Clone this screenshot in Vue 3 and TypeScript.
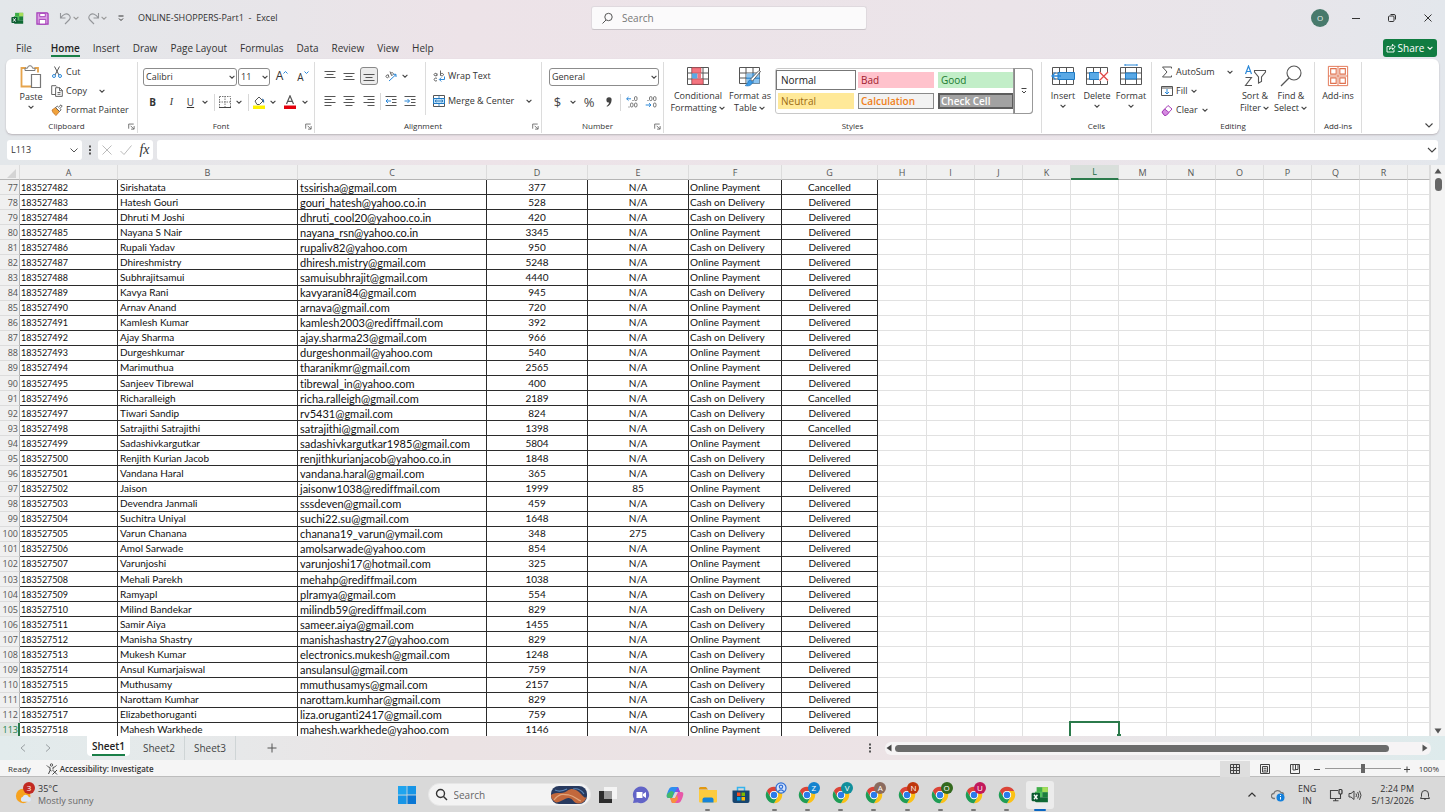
<script setup lang="ts">
import { ref } from 'vue'

type Row = [number, string, string, string, string, 'O' | 'C', 'D' | 'X']

const source: Row[] = [
  [77, 'Sirishatata', 'tssirisha@gmail.com', '377', 'N/A', 'O', 'X'],
  [78, 'Hatesh Gouri', 'gouri_hatesh@yahoo.co.in', '528', 'N/A', 'C', 'D'],
  [79, 'Dhruti M Joshi', 'dhruti_cool20@yahoo.co.in', '420', 'N/A', 'C', 'D'],
  [80, 'Nayana S Nair', 'nayana_rsn@yahoo.co.in', '3345', 'N/A', 'O', 'D'],
  [81, 'Rupali Yadav', 'rupaliv82@yahoo.com', '950', 'N/A', 'C', 'D'],
  [82, 'Dhireshmistry', 'dhiresh.mistry@gmail.com', '5248', 'N/A', 'O', 'D'],
  [83, 'Subhrajitsamui', 'samuisubhrajit@gmail.com', '4440', 'N/A', 'O', 'D'],
  [84, 'Kavya Rani', 'kavyarani84@gmail.com', '945', 'N/A', 'C', 'D'],
  [85, 'Arnav Anand', 'arnava@gmail.com', '720', 'N/A', 'O', 'D'],
  [86, 'Kamlesh Kumar', 'kamlesh2003@rediffmail.com', '392', 'N/A', 'O', 'D'],
  [87, 'Ajay Sharma', 'ajay.sharma23@gmail.com', '966', 'N/A', 'C', 'D'],
  [88, 'Durgeshkumar', 'durgeshonmail@yahoo.com', '540', 'N/A', 'O', 'D'],
  [89, 'Marimuthua', 'tharanikmr@gmail.com', '2565', 'N/A', 'O', 'D'],
  [90, 'Sanjeev Tibrewal', 'tibrewal_in@yahoo.com', '400', 'N/A', 'O', 'D'],
  [91, 'Richaralleigh', 'richa.ralleigh@gmail.com', '2189', 'N/A', 'C', 'X'],
  [92, 'Tiwari Sandip', 'rv5431@gmail.com', '824', 'N/A', 'C', 'D'],
  [93, 'Satrajithi Satrajithi', 'satrajithi@gmail.com', '1398', 'N/A', 'C', 'X'],
  [94, 'Sadashivkargutkar', 'sadashivkargutkar1985@gmail.com', '5804', 'N/A', 'O', 'D'],
  [95, 'Renjith Kurian Jacob', 'renjithkurianjacob@yahoo.co.in', '1848', 'N/A', 'C', 'D'],
  [96, 'Vandana Haral', 'vandana.haral@gmail.com', '365', 'N/A', 'C', 'D'],
  [97, 'Jaison', 'jaisonw1038@rediffmail.com', '1999', '85', 'O', 'D'],
  [98, 'Devendra Janmali', 'sssdeven@gmail.com', '459', 'N/A', 'C', 'D'],
  [99, 'Suchitra Uniyal', 'suchi22.su@gmail.com', '1648', 'N/A', 'O', 'D'],
  [100, 'Varun Chanana', 'chanana19_varun@ymail.com', '348', '275', 'C', 'D'],
  [101, 'Amol Sarwade', 'amolsarwade@yahoo.com', '854', 'N/A', 'O', 'D'],
  [102, 'Varunjoshi', 'varunjoshi17@hotmail.com', '325', 'N/A', 'O', 'D'],
  [103, 'Mehali Parekh', 'mehahp@rediffmail.com', '1038', 'N/A', 'O', 'D'],
  [104, 'Ramyapl', 'plramya@gmail.com', '554', 'N/A', 'C', 'D'],
  [105, 'Milind Bandekar', 'milindb59@rediffmail.com', '829', 'N/A', 'C', 'D'],
  [106, 'Samir Aiya', 'sameer.aiya@gmail.com', '1455', 'N/A', 'C', 'D'],
  [107, 'Manisha Shastry', 'manishashastry27@yahoo.com', '829', 'N/A', 'O', 'D'],
  [108, 'Mukesh Kumar', 'electronics.mukesh@gmail.com', '1248', 'N/A', 'C', 'D'],
  [109, 'Ansul Kumarjaiswal', 'ansulansul@gmail.com', '759', 'N/A', 'O', 'D'],
  [110, 'Muthusamy', 'mmuthusamys@gmail.com', '2157', 'N/A', 'C', 'D'],
  [111, 'Narottam Kumhar', 'narottam.kumhar@gmail.com', '829', 'N/A', 'C', 'D'],
  [112, 'Elizabethoruganti', 'liza.oruganti2417@gmail.com', '759', 'N/A', 'C', 'D'],
  [113, 'Mahesh Warkhede', 'mahesh.warkhede@yahoo.com', '1146', 'N/A', 'O', 'D'],
]

const firstId = 183527482
const rows = source.map((r) => ({
  num: r[0],
  id: firstId + r[0] - 77,
  name: r[1],
  email: r[2],
  amount: r[3],
  discount: r[4],
  payment: r[5] === 'O' ? 'Online Payment' : 'Cash on Delivery',
  status: r[6] === 'D' ? 'Delivered' : 'Cancelled',
}))

const dataCols = ['A', 'B', 'C', 'D', 'E', 'F', 'G']
const emptyCols = ['H', 'I', 'J', 'K', 'L', 'M', 'N', 'O', 'P', 'Q', 'R', '']
const tabs = ['File', 'Home', 'Insert', 'Draw', 'Page Layout', 'Formulas', 'Data', 'Review', 'View', 'Help']
const sheets = ['Sheet1', 'Sheet2', 'Sheet3']
const activeTab = ref('Home')
const activeSheet = ref('Sheet1')
const cellName = ref('L113')
const formula = ref('')
const zoomLevel = ref(50)
const profiles = [
  { letter: 'Z', tone: 'blue' },
  { letter: 'V', tone: 'teal' },
  { letter: 'A', tone: 'brown' },
  { letter: 'N', tone: 'rust' },
  { letter: 'O', tone: 'green' },
  { letter: 'U', tone: 'pink' },
]
</script>

<template>
  <div class="desktop">
    <svg class="defs" aria-hidden="true">
      <symbol id="chev" viewBox="0 0 8 8"><path d="M1.6 2.8 4 5.2 6.4 2.8" fill="none" stroke="currentColor" stroke-width="1.1" /></symbol>
      <symbol id="launch" viewBox="0 0 8 8"><path d="M.8 6.5V1.2H6.500M3 3.200 6.600 6.800M7 3.500V7H3.500" fill="none" stroke="currentColor" stroke-width=".9" /></symbol>
      <symbol id="chrome" viewBox="0 0 48 48">
        <path fill="#db4437" d="M4.950 13A22 22 0 0 1 43.050 13H24A11 11 0 0 0 14.470 29.500Z" />
        <path fill="#fbc116" d="M43.050 13A22 22 0 0 1 24 46L33.530 29.500A11 11 0 0 0 24 13Z" />
        <path fill="#1f9d55" d="M24 46A22 22 0 0 1 4.950 13L14.470 29.500A11 11 0 0 0 33.530 29.500Z" />
        <circle cx="24" cy="24" r="11" fill="#fff" /><circle cx="24" cy="24" r="8.600" fill="#2b7bea" />
      </symbol>
      <symbol id="excel" viewBox="0 0 16 16">
        <path fill="#3fae49" d="M5 1h10v4.500H5z" /><path fill="#a5dd5a" d="M10 1h5v4.500h-5z" /><path fill="#4fc15b" d="M3.500 5h6.500v5H3.500z" />
        <path fill="#1b7f3b" d="M10 5.500h5V10h-5z" /><path fill="#0f6a33" d="M3.500 10H15v4.500H5A1.500 1.500 0 0 1 3.500 13z" />
        <rect x=".5" y="6" width="7.500" height="7.500" rx="1" fill="#0b5a30" /><path d="m2.700 7.800 3 4m0-4-3 4" stroke="#fff" stroke-width="1.200" />
      </symbol>
    </svg>

    <header class="chrome">
      <div class="titlebar">
        <div class="quick">
          <svg class="i13" viewBox="0 0 16 16"><use href="#excel" /></svg>
          <button class="save" aria-label="Save"><svg class="i13" viewBox="0 0 14 14"><path d="M1 1h11l1 1v11H1z" fill="#dba0e4" stroke="#a33bb8" stroke-width="1.300" /><path d="M4 1.500h6V5H4zM3.500 8h7v5h-7z" fill="#fff" stroke="#a33bb8" /></svg></button>
          <button class="hist" aria-label="Undo"><svg class="i13" viewBox="0 0 13 13"><path d="M1.500 1v5H6.500M1.800 5.800C4 2 7.500 1 9.800 2.800c2 1.700 1.700 3.700.2 5.200L6 12" fill="none" stroke="#94969a" stroke-width="1.100" /></svg></button>
          <svg class="chev dim"><use href="#chev" /></svg>
          <button class="hist redo" aria-label="Redo"><svg class="i13" viewBox="0 0 13 13"><path d="M11.500 1v5H6.500M11.200 5.800C9 2 5.500 1 3.200 2.800c-2 1.700-1.700 3.700-.2 5.200L7 12" fill="none" stroke="#94969a" stroke-width="1.100" /></svg></button>
          <svg class="chev dim"><use href="#chev" /></svg>
          <button class="custom" aria-label="Customize"><svg class="chev" viewBox="0 0 8 8"><path d="M1.500 2h5M2 4.500 4 6.500 6 4.500" fill="none" stroke="#333" /></svg></button>
          <span class="doc">ONLINE-SHOPPERS-Part1&nbsp; -&nbsp; Excel</span>
        </div>
        <label class="search"><svg class="i13" viewBox="0 0 13 13"><circle cx="7.500" cy="5" r="3.700" fill="none" stroke="#555" /><path d="M5 8 1.500 11.500" stroke="#555" /></svg><input type="text" placeholder="Search" aria-label="Search" /></label>
        <div class="window">
          <span class="avatar">O</span>
          <button aria-label="Minimize"><svg class="i10" viewBox="0 0 10 10"><path d="M1 5.500h8" stroke="#333" /></svg></button>
          <button aria-label="Restore"><svg class="i10" viewBox="0 0 10 10"><rect x="1.500" y="3" width="5.500" height="5.500" rx="1" fill="none" stroke="#333" /><path d="M3.500 1.500H7q1.500 0 1.500 1.500v3.500" fill="none" stroke="#333" /></svg></button>
          <button aria-label="Close"><svg class="i10" viewBox="0 0 10 10"><path d="m1.500 1.500 7 7m0-7-7 7" stroke="#333" /></svg></button>
        </div>
      </div>

      <nav class="tabs">
        <button v-for="t in tabs" :key="t" :class="{ on: t === activeTab }" @click="activeTab = t"><span>{{ t }}</span></button>
        <button class="share"><svg class="i10" viewBox="0 0 10 10"><path d="M3.500 3.500h-2.500v5.500h7V6.500M3.500 6.500C3.500 4 5 3 6.500 3V1.200L9.300 4 6.500 6.500V5C5 5 4.200 5.500 3.500 6.500Z" fill="none" stroke="#fff" stroke-width=".9" /></svg>Share<svg class="chev"><use href="#chev" /></svg></button>
      </nav>

      <section class="ribbon">
        <div class="group clip">
          <div class="body">
            <button class="big paste"><svg class="i24" viewBox="0 0 24 24"><path d="M7 3H2.500v18.500H12M15.500 3H19v4.500" fill="none" stroke="#e6a44c" stroke-width="1.800" /><path d="M6 5.500V3.200h2.500a2.500 2.500 0 0 1 5 0H16v2.300z" fill="#fff" stroke="#777" /><path d="M12.500 9.500h9v13h-9z" fill="#fff" stroke="#777" stroke-width="1.200" /></svg><span>Paste</span><svg class="chev"><use href="#chev" /></svg></button>
            <div class="stack">
              <button><svg class="i12" viewBox="0 0 12 12"><path d="M3.500.5 8 9M8.500.5 4 9" fill="none" stroke="#555" /><circle cx="3" cy="10" r="1.500" fill="none" stroke="#2b88d8" /><circle cx="9" cy="10" r="1.500" fill="none" stroke="#2b88d8" /></svg>Cut</button>
              <button><svg class="i12" viewBox="0 0 12 12"><path d="M4.500 9.500H.7V.7H5l1 1M4.600 2.700h4l2.700 2.700v6H4.600zM8.500 2.700v3h3M6.500 7.500h3M6.500 9.300h3" fill="none" stroke="#555" stroke-width=".9" /></svg>Copy<svg class="chev far"><use href="#chev" /></svg></button>
              <button><svg class="i12" viewBox="0 0 12 12"><path d="m1 6 3.500-2.500 4 4L5 11.500C4 10 2 10 1 6Z" fill="#f0a23c" stroke="#b9671c" stroke-width=".7" /><path d="m4.500 3.500 1.800-1.300 1.200 1L10 .8l1.200 1.200L9 4.500l1 1.300-1.500 1.700z" fill="#fff" stroke="#555" stroke-width=".9" /></svg>Format Painter</button>
            </div>
          </div>
          <div class="label"><span>Clipboard</span><svg class="launch"><use href="#launch" /></svg></div>
        </div>

        <div class="group font">
          <div class="body col">
            <div class="fontrow">
              <span class="drop"><select aria-label="Font"><option>Calibri</option></select><svg class="chev"><use href="#chev" /></svg></span>
              <span class="drop"><select aria-label="Font size"><option>11</option></select><svg class="chev"><use href="#chev" /></svg></span>
              <button class="lg" aria-label="Increase font size">A<svg class="mini" viewBox="0 0 5 5"><path d="M.5 3.500 2.500 1.500 4.500 3.500" fill="none" stroke="#2b88d8" /></svg></button>
              <button class="md" aria-label="Decrease font size">A<svg class="mini" viewBox="0 0 5 5"><path d="M.5 1.500 2.500 3.500 4.500 1.500" fill="none" stroke="#2b88d8" /></svg></button>
            </div>
            <div class="fmtrow">
              <button class="b">B</button><button class="it">I</button><button class="u">U</button><svg class="chev"><use href="#chev" /></svg><i class="bar"></i>
              <button aria-label="Borders"><svg class="i12" viewBox="0 0 12 12"><path d="M.5.5h11v11M.5.5v11M6 0v11M0 6h12" fill="none" stroke="#777" stroke-dasharray="1.500 1" /><path d="M0 11.500h12" stroke="#444" /></svg></button><svg class="chev"><use href="#chev" /></svg><i class="bar"></i>
              <button aria-label="Fill color"><svg class="i14" viewBox="0 0 14 14"><path d="m3 6 4-4 4 4-3.500 3.500H5z" fill="#fff" stroke="#555" /><path d="M10 3.500c2 .5 2.500 2 2 5-1-1.500-1.500-3-2-5" fill="#2b6cb0" /><path fill="#fff200" d="M1 10.500h12V14H1z" /></svg></button><svg class="chev"><use href="#chev" /></svg>
              <button aria-label="Font color"><svg class="i14" viewBox="0 0 14 14"><path d="M3.500 9 7 .8 10.500 9M4.700 6.300h4.600" fill="none" stroke="#555" stroke-width="1.200" /><path fill="#e3000b" d="M1 10.500h12V14H1z" /></svg></button><svg class="chev"><use href="#chev" /></svg>
            </div>
          </div>
          <div class="label"><span>Font</span><svg class="launch"><use href="#launch" /></svg></div>
        </div>

        <div class="group align">
          <div class="body">
            <div class="col">
              <div class="alignrow">
                <button aria-label="Top align"><svg class="i12" viewBox="0 0 12 12"><path d="M.5 1.500h11M2.500 4.500h7M.5 7.500h11" stroke="#555" /></svg></button>
                <button aria-label="Middle align"><svg class="i12" viewBox="0 0 12 12"><path d="M.5 3.500h11M2.500 6.500h7M.5 9.500h11" stroke="#555" /></svg></button>
                <button class="pressed" aria-label="Bottom align"><svg class="i12" viewBox="0 0 12 12"><path d="M.5 4.500h11M2.500 7.500h7M.5 10.500h11" stroke="#555" /></svg></button>
                <i></i>
                <button aria-label="Orientation"><svg class="i12" viewBox="0 0 12 12"><path d="M3.300 5.500a1.300 1.300 0 1 0 .1 1.600M3.200 4.500 4 7.500M5 1.500l1.500 4M5.800 3.500a1.300 1.300 0 1 1 .6 1.600" fill="none" stroke="#555" stroke-width=".9" /><path d="M4 11 11 4.500M8.500 4.300H11V7" fill="none" stroke="#2b88d8" /></svg></button>
                <svg class="chev"><use href="#chev" /></svg>
              </div>
              <div class="alignrow">
                <button aria-label="Align left"><svg class="i12" viewBox="0 0 12 12"><path d="M.5 1.500h11M.5 4.500h7M.5 7.500h11M.5 10.500h7" stroke="#555" /></svg></button>
                <button aria-label="Center"><svg class="i12" viewBox="0 0 12 12"><path d="M.5 1.500h11M2.500 4.500h7M.5 7.500h11M2.500 10.500h7" stroke="#555" /></svg></button>
                <button aria-label="Align right"><svg class="i12" viewBox="0 0 12 12"><path d="M.5 1.500h11M4.500 4.500h7M.5 7.500h11M4.500 10.500h7" stroke="#555" /></svg></button>
                <i class="bar"></i>
                <button aria-label="Decrease indent"><svg class="i12" viewBox="0 0 12 12"><path d="M.5 1.500h11M7 4.500h4.500M7 7.500h4.500M.5 10.500h11" stroke="#555" /><path d="M6 6H1M3 4 1 6l2 2" fill="none" stroke="#2b88d8" /></svg></button>
                <button aria-label="Increase indent"><svg class="i12" viewBox="0 0 12 12"><path d="M.5 1.500h11M7 4.500h4.500M7 7.500h4.500M.5 10.500h11" stroke="#555" /><path d="M.5 6h5M3.500 4l2 2-2 2" fill="none" stroke="#2b88d8" /></svg></button>
              </div>
            </div>
            <div class="col wrap">
              <button class="txt"><svg class="i12" viewBox="0 0 12 12"><path d="M4 3.500v2.200M4 4.700a1.500 1.200 0 1 1-.1-.5M7.500.5v5.200M7.500 4.500a1.500 1.200 0 1 1 0 .2M4 8.500a1.600 1.500 0 1 0 0 2" fill="none" stroke="#555" stroke-width=".9" /><path d="M11.500 6.500v3h-5M8.300 7.500l-2 2 2 2" fill="none" stroke="#2b88d8" /></svg>Wrap Text</button>
              <button class="txt"><svg class="i12" viewBox="0 0 12 12"><path d="M.5.500h11v11H.5z" fill="#fff" stroke="#555" /><path d="M.5 3.500h11v5H.5z" fill="#bfe0f7" stroke="#1f7ac4" /><path d="M2 6h8M3.500 4.800 2 6l1.500 1.200M8.500 4.800 10 6 8.500 7.200M6 .5v3M6 8.500v3" fill="none" stroke="#1f6fb5" stroke-width=".8" /></svg>Merge &amp; Center<svg class="chev"><use href="#chev" /></svg></button>
            </div>
          </div>
          <div class="label"><span>Alignment</span><svg class="launch"><use href="#launch" /></svg></div>
        </div>

        <div class="group number">
          <div class="body col">
            <span class="drop"><select aria-label="Number format"><option>General</option></select><svg class="chev"><use href="#chev" /></svg></span>
            <div class="numrow">
              <button class="sym">$</button><svg class="chev"><use href="#chev" /></svg><button class="sym">%</button><button aria-label="Comma style"><svg class="i12" viewBox="0 0 12 12"><path d="M6 1.200a2.600 2.600 0 0 1 2.600 2.900C8.600 7.500 6.500 9.800 4 10.800l-.4-.8C5.200 9 6 7.800 6.100 6.500A2.600 2.600 0 0 1 6 1.200" fill="#444" /></svg></button><i class="bar"></i>
              <button aria-label="Increase decimal"><svg class="i12" viewBox="0 0 12 12"><path d="M5 2.800H.7M2.500 1 .7 2.800l1.800 1.800" fill="none" stroke="#2b88d8" /><rect x="8.500" y=".6" width="2.500" height="4" rx="1.200" fill="none" stroke="#555" stroke-width=".8" /><rect x="4.500" y="7" width="2.500" height="4" rx="1.200" fill="none" stroke="#555" stroke-width=".8" /><rect x="8.500" y="7" width="2.500" height="4" rx="1.200" fill="none" stroke="#555" stroke-width=".8" /><path d="M2.500 11h1M6.500 4.500h1" stroke="#555" /></svg></button>
              <button aria-label="Decrease decimal"><svg class="i12" viewBox="0 0 12 12"><path d="M.7 9H6M4 7.200 6 9l-2 1.800" fill="none" stroke="#2b88d8" /><rect x="8.500" y=".6" width="2.500" height="4" rx="1.200" fill="none" stroke="#555" stroke-width=".8" /><rect x="4.500" y=".6" width="2.500" height="4" rx="1.200" fill="none" stroke="#555" stroke-width=".8" /><rect x="8.500" y="7" width="2.500" height="4" rx="1.200" fill="none" stroke="#555" stroke-width=".8" /><path d="M2.500 4.500h1" stroke="#555" /></svg></button>
            </div>
          </div>
          <div class="label"><span>Number</span><svg class="launch"><use href="#launch" /></svg></div>
        </div>

        <div class="group styles">
          <div class="body">
            <button class="big cond"><svg class="ic22" viewBox="0 0 22 18"><path d="M.5.500h21v17H.5zM.5 6h21M.5 12h21M5 .5v17M16 .5v17" fill="#fff" stroke="#555" /><path fill="#f37580" stroke="#c9404c" stroke-width=".6" d="M5 .8h9V6H5zM5 12h11v5.200H5z" /><path fill="#5aa9e6" d="M5 6.500h5.500v5H5z" /><path fill="#f37580" d="M10.500 6.500H14v5h-3.500z" /></svg><span>Conditional</span><span>Formatting <svg class="chev"><use href="#chev" /></svg></span></button>
            <button class="big tbl"><svg class="ic22" viewBox="0 0 22 20"><path d="M.5.500h20v16H.5zM.5 6h20M.5 11h20M7 .5v16M14 .5v16" fill="#fff" stroke="#555" /><path fill="#8cc4f0" d="M7.500 6.500h13v10h-13z" /><path d="M7 11.200h14M14 6v10" stroke="#1f7ac4" /><path d="m21.500 4.500-8 9.500-2-1.800 8.500-8.700z" fill="#fff" stroke="#555" stroke-width=".9" /><path d="M11 13c-2.500.5-1.500 4-5 5.500 4 1.300 7.500-.5 7.200-3.500z" fill="#3b9ae6" stroke="#1f6fb5" stroke-width=".6" /></svg><span>Format as</span><span>Table <svg class="chev"><use href="#chev" /></svg></span></button>
            <div class="gallery">
              <div class="swatches">
                <button class="normal">Normal</button><button class="bad">Bad</button><button class="good">Good</button>
                <button class="neutral">Neutral</button><button class="calc">Calculation</button><button class="check">Check Cell</button>
              </div>
              <button class="more" aria-label="More styles"><svg class="chev" viewBox="0 0 8 8"><path d="M1.500 1.500h5M2 4 4 6 6 4" fill="none" stroke="#444" /></svg></button>
            </div>
          </div>
          <div class="label"><span>Styles</span></div>
        </div>

        <div class="group cells">
          <div class="body">
            <button class="big"><svg class="ic24" viewBox="0 0 24 18"><path d="M1.500.500h21v17h-21zM1.500 6h21M1.500 12h21M8.500.500v17M15.500.500v17" fill="#fff" stroke="#555" /><path d="M7 5.500h16.500v7H7z" fill="#5aa9e6" stroke="#1f7ac4" /><path d="M10 9H1M4.500 5.500 1 9l3.500 3.500" fill="none" stroke="#2b88d8" stroke-width="1.300" /></svg><span>Insert</span><svg class="chev"><use href="#chev" /></svg></button>
            <button class="big"><svg class="ic24" viewBox="0 0 24 18"><path d="M1.500.500h21v17h-21zM1.500 6h21M1.500 12h21M8.500.500v17M15.500.500v17" fill="#fff" stroke="#555" /><path d="M4.500 5.500h10v7h-10z" fill="#5aa9e6" stroke="#1f7ac4" /><path d="M14 5h9v9h-9z" fill="#fff" /><path d="m14.500 5 8.500 8.500m0-8.500-8.500 8.500" stroke="#e04a4a" stroke-width="1.300" /></svg><span>Delete</span><svg class="chev"><use href="#chev" /></svg></button>
            <button class="big"><svg class="ic24 tall" viewBox="0 0 24 21"><path d="M1.500 3.500h21v17h-21zM1.500 9h21M1.500 15h21M6.500 3.500v17M17.500 3.500v17" fill="#fff" stroke="#555" /><path d="M6.500 9h11v6h-11z" fill="#5aa9e6" stroke="#1f7ac4" /><path d="M6 1h12M6 0v2M18 0v2" stroke="#2b88d8" /></svg><span>Format</span><svg class="chev"><use href="#chev" /></svg></button>
          </div>
          <div class="label"><span>Cells</span></div>
        </div>

        <div class="group edit">
          <div class="body">
            <div class="stack">
              <button><svg class="i12" viewBox="0 0 12 12"><path d="M10.500 2.500v-1.500H1.500L6 6 1.500 11h9V9.500" fill="none" stroke="#555" /></svg>AutoSum<svg class="chev far"><use href="#chev" /></svg></button>
              <button><svg class="i12" viewBox="0 0 12 12"><path d="M.5 1.500h11v9H.5zM.5 3h11" fill="none" stroke="#555" /><path d="M6 4v5M4 7l2 2 2-2" fill="none" stroke="#2b88d8" /></svg>Fill<svg class="chev"><use href="#chev" /></svg></button>
              <button><svg class="i12" viewBox="0 0 12 12"><path d="m1 8 6-6.500 4 3.500-6 6.500H3.500z" fill="#fff" stroke="#a640b8" /><path d="m1 8 2.700-3L8 8.500l-3 3H3.500z" fill="#d58be0" stroke="#a640b8" /></svg>Clear<svg class="chev"><use href="#chev" /></svg></button>
            </div>
            <button class="big sort"><svg class="ic24 sq" viewBox="0 0 24 22"><path d="M2.500 9 5.500 1l3 8M3.500 6.500h4" fill="none" stroke="#2b88d8" stroke-width="1.200" /><path d="M2.500 12.500h6L2.500 20.500h6.500M11.500 5.500h11v1.500L18.500 12v4.500L15.500 18v-6L11.500 7z" fill="none" stroke="#555" stroke-width="1.100" /></svg><span>Sort &amp;</span><span>Filter <svg class="chev"><use href="#chev" /></svg></span></button>
            <button class="big find"><svg class="ic24 sq" viewBox="0 0 24 22"><circle cx="15" cy="8" r="7" fill="none" stroke="#555" stroke-width="1.100" /><path d="M10 13 2 21" stroke="#555" stroke-width="1.200" /></svg><span>Find &amp;</span><span>Select <svg class="chev"><use href="#chev" /></svg></span></button>
          </div>
          <div class="label"><span>Editing</span></div>
        </div>

        <div class="group addins">
          <div class="body"><button class="big"><svg class="ic24 sq" viewBox="0 0 24 24"><path d="M1.500 1.500h21v21h-21zM12 1.500v21M1.500 12h21" fill="none" stroke="#e0714e" stroke-width="1" /><path d="M4 4h6v6H4zM14 4h6v6h-6zM4 14h6v6H4zM14 14h6v6h-6z" fill="#fff" stroke="#e0714e" stroke-width="1.200" /></svg><span>Add-ins</span></button></div>
          <div class="label"><span>Add-ins</span></div>
        </div>
        <button class="collapse" aria-label="Collapse ribbon"><svg class="i10" viewBox="0 0 10 10"><path d="M1.500 3.500 5 7l3.500-3.500" fill="none" stroke="#444" stroke-width="1.100" /></svg></button>
      </section>

      <div class="formulabar">
        <label class="namebox"><input v-model="cellName" type="text" aria-label="Name box" /><svg class="i10" viewBox="0 0 10 10"><path d="M1.500 3.500 5 7l3.500-3.500" fill="none" stroke="#555" /></svg></label>
        <svg class="dots" viewBox="0 0 4 12"><path d="M1 1.500h2v2H1zM1 5h2v2H1zM1 8.500h2v2H1z" fill="#555" /></svg>
        <div class="fx">
          <button aria-label="Cancel"><svg class="i12" viewBox="0 0 12 12"><path d="m1.500 1.500 9 9m0-9-9 9" stroke="#bbb" /></svg></button>
          <button aria-label="Enter"><svg class="i12" viewBox="0 0 12 12"><path d="m.5 7 3.500 3.500 7.500-9" fill="none" stroke="#bbb" /></svg></button>
          <button class="fn">fx</button>
        </div>
        <label class="entry"><input v-model="formula" type="text" aria-label="Formula" /><svg class="i10" viewBox="0 0 10 10"><path d="M1 3 5 7l4-4" fill="none" stroke="#444" stroke-width="1.100" /></svg></label>
      </div>
    </header>

    <main class="sheet">
      <div class="gridwrap">
        <table>
          <colgroup>
            <col class="c-num" /><col class="c-a" /><col class="c-b" /><col class="c-c" /><col class="c-d" /><col class="c-d" /><col class="c-f" /><col class="c-g" />
            <col v-for="c in emptyCols" :key="c" :class="c === '' ? 'c-rest' : c === 'H' || c === 'N' ? 'c-wide' : 'c-std'" />
          </colgroup>
          <thead>
            <tr>
              <th class="corner"><svg viewBox="0 0 9 9"><path d="M9 0v9H0z" fill="#d4d4d4" /></svg></th>
              <th v-for="c in dataCols" :key="c" scope="col">{{ c }}</th>
              <th v-for="c in emptyCols" :key="c" scope="col" :class="{ sel: c === 'L' }">{{ c }}</th>
            </tr>
          </thead>
          <tbody>
            <tr v-for="r in rows" :key="r.num">
              <th scope="row" :class="{ sel: r.num === 113 }">{{ r.num }}</th>
              <td class="d id">{{ r.id }}</td>
              <td class="d">{{ r.name }}</td>
              <td class="d email">{{ r.email }}</td>
              <td class="d mid">{{ r.amount }}</td>
              <td class="d mid">{{ r.discount }}</td>
              <td class="d pay">{{ r.payment }}</td>
              <td class="d mid">{{ r.status }}</td>
              <td v-for="c in emptyCols" :key="c" :class="{ cursor: c === 'L' && r.num === 113 }"></td>
            </tr>
          </tbody>
        </table>
      </div>
      <div class="vscroll">
        <svg class="tri" viewBox="0 0 8 8"><path d="M4 1.500 7.500 6.500h-7z" fill="#555" /></svg><i></i><svg class="tri end" viewBox="0 0 8 8"><path d="M4 6.500.5 1.500h7z" fill="#555" /></svg>
      </div>
    </main>

    <div class="sheetbar">
      <div class="arrows">
        <button aria-label="Previous sheet"><svg class="i10" viewBox="0 0 10 10"><path d="M7 1.500 3 5l4 3.500" fill="none" stroke="#9aa0a3" /></svg></button>
        <button aria-label="Next sheet"><svg class="i10" viewBox="0 0 10 10"><path d="M3 1.500 7 5 3 8.500" fill="none" stroke="#9aa0a3" /></svg></button>
      </div>
      <button v-for="s in sheets" :key="s" class="stab" :class="{ on: s === activeSheet }" @click="activeSheet = s"><span>{{ s }}</span></button>
      <button class="add" aria-label="New sheet"><svg class="i10" viewBox="0 0 10 10"><path d="M5 .5v9M.5 5h9" stroke="#555" /></svg></button>
      <svg class="dots" viewBox="0 0 4 12"><path d="M1 1.500h2v2H1zM1 5h2v2H1zM1 8.500h2v2H1z" fill="#555" /></svg>
      <div class="hscroll">
        <svg class="tri" viewBox="0 0 8 8"><path d="M1.500 4 6.500.5v7z" fill="#444" /></svg><i></i><svg class="tri end" viewBox="0 0 8 8"><path d="M6.500 4 1.500.5v7z" fill="#555" /></svg>
      </div>
    </div>

    <div class="status">
      <span class="ready">Ready</span>
      <button class="acc"><svg class="i12" viewBox="0 0 12 12"><circle cx="5.500" cy="2" r="1.200" fill="none" stroke="#444" stroke-width=".9" /><path d="M.8 2.500C2 4 3 4.200 4 4.500v3L2.500 11M10.500 2.500C9 4 8 4.200 7 4.500v2M6.500 7l4.500 4.500M11 7l-4.500 4.500M4 7l1.500 1" fill="none" stroke="#444" /></svg>Accessibility: Investigate</button>
      <button class="view on" aria-label="Normal view"><svg class="i10" viewBox="0 0 10 10"><path d="M.5.500h9v9h-9zM.5 3.500h9M.5 6.500h9M3.500.5v9M6.500.5v9" fill="none" stroke="#444" /></svg></button>
      <button class="view" aria-label="Page layout view"><svg class="i10" viewBox="0 0 10 10"><path d="M.5.500h9v9h-9zM2.500 2.500h5v5.500h-5zM3.500 4.300h3M3.500 6.200h3" fill="none" stroke="#444" /></svg></button>
      <button class="view" aria-label="Page break view"><svg class="i10" viewBox="0 0 10 10"><path d="M.5.500h9v9h-9zM3 .5V6h2.500V.5M5.500 5.500H8V.5" fill="none" stroke="#444" /></svg></button>
      <button class="z" aria-label="Zoom out"><svg class="i8" viewBox="0 0 8 8"><path d="M1 4.500h6" stroke="#444" /></svg></button>
      <input v-model.number="zoomLevel" class="slider" type="range" min="0" max="100" aria-label="Zoom" />
      <button class="z" aria-label="Zoom in"><svg class="i8" viewBox="0 0 8 8"><path d="M1 4.500h6M4 1.500v6" stroke="#444" /></svg></button>
      <span class="pct">100%</span>
    </div>

    <footer class="taskbar">
      <div class="weather">
        <svg class="sun" viewBox="0 0 22 22"><circle cx="9" cy="12" r="8" fill="#f6a21e" /><path d="M4 5.500A8 8 0 0 0 14 18a8 8 0 0 1-10-12.500" fill="#e8821a" /><path d="M8 18.500a3 3 0 0 1 .5-5.500 3.500 3.500 0 0 1 6.500 0 2.800 2.800 0 0 1 .5 5.500z" fill="#dbe7f8" /></svg>
        <span class="count">3</span>
        <div><div>35°C</div><div class="sky">Mostly sunny</div></div>
      </div>
      <div class="apps">
        <button class="start" aria-label="Start"><svg class="i18" viewBox="0 0 18 18"><path fill="#1fa4ee" d="M0 0h8.600v8.600H0z" /><path fill="#1795e6" d="M9.400 0H18v8.600H9.400zM0 9.400h8.600V18H0z" /><path fill="#0a77d4" d="M9.400 9.400H18V18H9.400z" /></svg></button>
        <label class="tsearch"><svg class="i13" viewBox="0 0 13 13"><circle cx="5.500" cy="5.500" r="4" fill="none" stroke="#333" stroke-width="1.400" /><path d="m8.500 8.500 3.500 3.500" stroke="#333" stroke-width="1.400" /></svg><input type="text" placeholder="Search" aria-label="Taskbar search" />
          <svg class="pic" viewBox="0 0 36 18" preserveAspectRatio="none"><rect width="36" height="18" rx="8" fill="#27395e" /><path d="M0 9C6 5 10 9 16 5c6-4 10-1 14 3 3 3 3.500 4 5.500 3.500C33 17 30 17.500 27 17.500c-4 0-5-5-9-5.500s-8 4.500-13 4.500C1.500 15 0 12 0 9Z" fill="#c2683c" /><path d="M3 14c5-7 9-6 15-5 6 1 8 5 12 6" fill="none" stroke="#e2a67c" stroke-width="1.200" /><path d="M4 4c4 2 8 1 12-1M22 3c5-1 9 2 11 5" fill="none" stroke="#5c86b8" stroke-width="1.200" /></svg>
        </label>
        <div class="icons">
          <button aria-label="Task view"><svg class="i18" viewBox="0 0 18 18"><path fill="#f4f4f4" d="M5 1h13v12H5z" /><path fill="#2c2c2c" d="M0 5h5v8h8v4H0z" /><path fill="#9b9b9b" d="M5 5h8v8H5z" /></svg></button>
          <button aria-label="Chat"><svg class="i18" viewBox="0 0 18 18"><path fill="#6264c7" d="M9 .5a8.300 8.300 0 1 1-3.500 15.900L1 17l1-4A8.300 8.300 0 0 1 9 .5" /><path fill="#fff" d="M4.500 6h6v6h-6zM11 8l3-2v6l-3-2z" /></svg></button>
          <button aria-label="Copilot"><svg class="i18" viewBox="0 0 18 18"><path fill="#2d8ef0" d="M6 1h6l2 5H9L6 12H2.500C0 12 .5 9 1.500 6.500S3.500 1 6 1" /><path fill="#46b86b" d="m1 8 4-3 3 1-2 6H2.500C.8 12 .6 10 1 8" /><path fill="#e858a8" d="M12 17H6l-2-5h5l3-6h3.500c2.500 0 2 3 1 5.500S14.500 17 12 17" /><path fill="#f7913d" d="m4 12 5 .2 2-3.200 1 4-3 4H6z" /><path fill="#8a4be0" d="m12 1 2 5h-3l-2 0z" /></svg></button>
          <button class="run" aria-label="File Explorer"><svg class="i18" viewBox="0 0 18 18"><path fill="#e2980f" d="M0 2.500Q0 1 1.500 1H7l2 2.500H0z" /><path fill="#fccb3f" d="M0 4h18v11.500q0 1-1 1H1q-1 0-1-1z" /><path fill="#1583d8" d="M3.500 16.500v-3q0-2 2-2h7q2 0 2 2v3z" /></svg></button>
          <button aria-label="Store"><svg class="i18" viewBox="0 0 18 18"><path d="M5.500 5V1.500h7V5" fill="none" stroke="#35b4ee" stroke-width="1.500" /><path fill="#17456f" d="M.5 4.500h17V15q0 2-2 2h-13q-2 0-2-2z" /><path fill="#f25022" d="M5 6.500h3.500V10H5z" /><path fill="#7fba00" d="M9.500 6.500H13V10H9.500z" /><path fill="#00a4ef" d="M5 11h3.500v3.500H5z" /><path fill="#ffb900" d="M9.500 11H13v3.500H9.500z" /></svg></button>
          <button class="run" aria-label="Chrome, personal profile"><svg class="i18"><use href="#chrome" /></svg><span class="badge person"><svg viewBox="0 0 10 10"><circle cx="5" cy="5" r="4.200" fill="#d6e4fb" stroke="#2f6fd6" /><circle cx="5" cy="4" r="1.400" fill="none" stroke="#2f6fd6" /><path d="M2.500 8Q5 5 7.500 8" fill="none" stroke="#2f6fd6" /></svg></span></button>
          <button v-for="p in profiles" :key="p.letter" class="run"><svg class="i18"><use href="#chrome" /></svg><span class="badge" :class="p.tone">{{ p.letter }}</span></button>
          <button class="run" aria-label="Chrome"><svg class="i18"><use href="#chrome" /></svg></button>
          <button class="run xl" aria-label="Excel"><svg class="i18"><use href="#excel" /></svg></button>
        </div>
      </div>
      <div class="tray">
        <svg class="i10" viewBox="0 0 10 10"><path d="M1.500 6.500 5 3l3.500 3.500" fill="none" stroke="#333" stroke-width="1.200" /></svg>
        <svg class="i14" viewBox="0 0 14 14"><path d="M4 10.500H3a2.500 2.500 0 0 1-.2-5A4 4 0 0 1 10 4.500c1.500 0 2.500 1 2.800 2" fill="none" stroke="#777" stroke-width="1.300" /><circle cx="9.500" cy="9.500" r="4" fill="#1480dc" /><path d="M9.500 9v2.500M9.500 7v1" stroke="#fff" /></svg>
        <div class="lang"><div>ENG</div><div>IN</div></div>
        <svg class="i14 mon" viewBox="0 0 14 14"><path d="M9 2.500H1.500v8h10V8M6.500 10.500v2M4 12.700h5.500" fill="none" stroke="#444" stroke-width="1.100" /><rect x="10" y="1.500" width="3" height="4.500" rx="1" fill="none" stroke="#333" stroke-width="1.200" /><path d="M11.500 6v2.500" stroke="#333" /></svg>
        <svg class="i14" viewBox="0 0 14 14"><path d="M1 5.500h2L6 3v8.500L3 9H1z" fill="none" stroke="#444" /><path d="M8 5.500q1 1.700 0 3.500M9.700 4q2 3.200 0 6.500M11.500 2.800q3 4.500 0 9" fill="none" stroke="#444" /></svg>
        <div class="clock"><div>2:24 PM</div><div>5/13/2026</div></div>
        <svg class="i12" viewBox="0 0 12 12"><path d="M1.500 9.500 2.500 7.500V5a3.500 3.500 0 0 1 7 0v2.500l1 2zM4.700 9.500a1.400 1.400 0 0 0 2.600 0" fill="none" stroke="#444" /></svg>
      </div>
    </footer>
  </div>
</template>

<style>
html, body { margin: 0; background: #fff; }
</style>

<style scoped>
.desktop { height: 100vh; display: flex; flex-direction: column; overflow: hidden; font: 9px/12px "Open Sans", "Noto Sans", sans-serif; color: #333; background: #fff; }
.desktop *, .desktop *::before, .desktop *::after { box-sizing: border-box; }
.defs { position: absolute; width: 0; height: 0; }
svg { display: block; flex: none; }
button, input, select { font: inherit; color: inherit; border: 0; padding: 0; margin: 0; background: none; outline: none; min-width: 0; }
button { display: flex; align-items: center; justify-content: center; white-space: nowrap; }
.i8 { width: 8px; height: 8px; } .i10 { width: 10px; height: 10px; } .i12 { width: 12px; height: 12px; } .i13 { width: 13px; height: 13px; }
.i14 { width: 14px; height: 14px; } .i18 { width: 18px; height: 18px; } .i24 { width: 24px; height: 24px; }
.chev { width: 8px; height: 8px; color: #444; }
.dim { color: #999; }

.chrome { flex: none; height: 165px; background: linear-gradient(90deg, #e3e7ea 0%, #e8e5e9 20%, #ede3e8 32%, #ebe4e9 70%, #e8e5ea 88%, #e3e7ec 100%); display: flex; flex-direction: column; }
.titlebar { height: 36px; display: grid; grid-template-columns: 591fr 276px 578fr; align-items: center; }
.quick { display: flex; align-items: center; padding-left: 11px; }
.save { margin-left: 12px; }
.hist { margin-left: 9px; width: 14px; }
.redo { margin-left: 6px; }
.custom { margin: 0 13px 0 9px; }
.doc { white-space: nowrap; }
.search { height: 24px; background: #fbfafb; border: 1px solid #dfd9de; border-bottom-color: #c9c3c8; border-radius: 3px; display: flex; align-items: center; gap: 8px; padding-left: 9px; }
.search input { flex: 1; font-size: 10px; }
.search input::placeholder { color: #777; }
.window { display: flex; align-items: center; justify-content: flex-end; padding-right: 12px; gap: 26px; }
.avatar { width: 18px; height: 18px; border-radius: 50%; background: #487a6c; color: #e9f1ee; display: flex; align-items: center; justify-content: center; font-size: 8px; margin-right: -4px; }
.tabs { height: 23px; display: flex; align-items: center; padding: 0 8px 0 9px; font-size: 10px; }
.tabs > button { padding: 0 6px 0 7px; height: 23px; }
.tabs > button:first-child { margin-right: 6px; }
.tabs .on span { font-weight: 600; color: #222; border-bottom: 2px solid #1a7f48; line-height: 14px; margin-top: 2px; }
.tabs .share { margin: 0 0 0 auto; height: 18px; width: 54px; padding: 0; gap: 2px; background: #107c41; color: #fff; border-radius: 3px; }
.share .chev { color: #fff; }

.ribbon { margin: 0 6px; height: 75px; background: #fff; border-radius: 6px; box-shadow: 0 1px 2px #b8b3b8; display: flex; padding: 3px 0 1px; }
.group { border-right: 1px solid #dcdcdc; display: flex; flex-direction: column; flex: none; }
.body { flex: 1; display: flex; }
.col { display: flex; flex-direction: column; }
.label { height: 13px; line-height: 12px; display: flex; justify-content: center; position: relative; font-size: 8px; color: #333; }
.clip .label, .font .label, .align .label, .number .label { padding-right: 10px; }
.launch { position: absolute; right: 2px; bottom: 3px; width: 7px; height: 7px; color: #555; }
.clip { width: 132px; } .font { width: 177px; } .align { width: 227px; } .number { width: 122px; } .styles { width: 378px; } .cells { width: 110px; } .edit { width: 163px; } .addins { width: 47px; }
.big { flex-direction: column; justify-content: flex-start; padding-top: 5px; }
.big span { display: flex; align-items: center; gap: 1px; line-height: 12px; }
.big > svg:first-child { margin-bottom: 5px; }
.paste { width: 50px; padding-top: 3px; }
.big.paste > svg:first-child { margin-bottom: 2px; }
.stack { display: flex; flex-direction: column; gap: 6px; padding-top: 3px; }
.stack button { justify-content: flex-start; height: 13px; gap: 3px; }
.stack .far { margin-left: 8px; }
.clip .stack { margin-left: -5px; }

.drop { position: relative; display: block; height: 18px; }
.drop select { appearance: none; width: 100%; height: 18px; border: 1px solid #8c8c8c; border-radius: 3px; padding-left: 2px; background: #fff; }
.drop .chev { position: absolute; right: 1px; top: 5px; pointer-events: none; }
.font .body, .number .body { padding-top: 6px; padding-left: 5px; gap: 7px; }
.number .body { padding-left: 7px; }
.fontrow { display: grid; grid-template-columns: 94px 32px 22px 18px; column-gap: 1px; }
.lg, .md { align-items: flex-start; }
.lg { font-size: 12px; line-height: 16px; } .md { font-size: 10px; line-height: 18px; }
.mini { width: 5px; height: 5px; margin-top: 2px; }
.fmtrow { display: grid; grid-template-columns: 19px 19px 19px 10px 8px 13px 16px 2px 20px 8px 26px 4px; align-items: center; height: 18px; justify-items: center; }
.fmtrow button { font-size: 10px; }
.bar { width: 1px; height: 17px; background: #d8d8d8; }
.b { font-weight: 700; } .it { font-style: italic; font-family: "Liberation Serif", serif; } .u { text-decoration: underline; }
.align .body > .col { padding: 5px 0 0 5px; gap: 7px; width: 110px; }
.alignrow { display: grid; grid-template-columns: 19px 20px 19px 4px 18px 20px; align-items: center; justify-items: center; height: 18px; }
.alignrow .chev { justify-self: start; margin-left: 1px; }
.pressed { width: 18px; height: 18px; border: 1px solid #888; border-radius: 3px; background: #ececec; }
.align .body > .wrap { border-left: 1px solid #dcdcdc; margin-bottom: 5px; padding-left: 7px; }
.txt { justify-content: flex-start; height: 18px; gap: 3px; }
.txt .chev { margin-left: 8px; }
.number .drop { width: 110px; }
.numrow { display: grid; grid-template-columns: 17px 13px 20px 20px 3px 19px 20px; align-items: center; justify-items: center; height: 18px; }
.sym { font-size: 13px; color: #444; }
.cond { width: 68px; } .tbl { width: 36px; }
.ic22 { width: 22px; height: 18px; } .ic24 { width: 24px; height: 18px; }
.big.tbl > svg:first-child { height: 20px; margin-bottom: 3px; }
.gallery { display: flex; margin: 6px 0 0 7px; height: 46px; width: 258px; border: 1px solid #c8c8c8; border-radius: 3px; }
.swatches { flex: 1; display: grid; grid-template-columns: repeat(3, 76px); grid-template-rows: 16px 16px; gap: 5px 4px; padding: 3px 0 0 2px; font-size: 10px; }
.swatches button { justify-content: flex-start; padding-left: 3px; }
.normal { outline: 1px solid #777; outline-offset: 1px; background: #fff; color: #222; }
.bad { background: #ffc2cc; color: #a01a2c; } .good { background: #c2eec8; color: #1a7a2e; } .neutral { background: #ffe999; color: #9c6a10; }
.calc { background: #f2f2f2; color: #f08020; font-weight: 600; border: 1px solid #8a8a8a; }
.check { background: #a2a2a2; color: #fff; font-weight: 600; border: 2px solid #5d5d5d; }
.swatches .calc { padding-left: 2px; } .swatches .check { padding-left: 1px; }
.more { width: 18px; border-left: 1px solid #888; box-shadow: 0 0 0 1px #999; border-radius: 0 3px 3px 0; }
.cells .body { padding-left: 4px; }
.cells .big { width: 34px; }
.cells .big > .tall { height: 21px; margin-top: -3px; }
.edit .stack { padding-left: 9px; width: 85px; }
.sort, .find { width: 36px; }
.sq { height: 22px; }
.edit .big, .addins .big { padding-top: 3px; }
.big > .sq:first-child { margin-bottom: 3px; }
.addins .big { width: 46px; }
.collapse { margin: auto 5px 3px auto; }

.formulabar { height: 20px; margin: 6px 7px 0; display: flex; align-items: stretch; }
.formulabar > div, .formulabar > label { background: #fff; border-radius: 3px; display: flex; align-items: center; }
.namebox { width: 75px; padding: 0 3px 0 4px; }
.namebox input { flex: 1; width: 40px; }
.dots { width: 4px; height: 12px; }
.formulabar .dots { margin: 4px 6px; }
.fx { width: 55px; justify-content: space-around; }
.fn { font: italic 14px/14px "Liberation Serif", serif; color: #333; }
.entry { flex: 1; margin-left: 4px; padding: 0 1px 0 4px; }
.entry input { flex: 1; }

.sheet { flex: 1; min-height: 0; display: flex; background: #fff; }
.gridwrap { flex: 1; min-width: 0; height: 100%; overflow: hidden; }
table { width: 100%; height: calc(100% + 2px); table-layout: fixed; border-collapse: separate; border-spacing: 0; }
thead tr { height: 15px; }
.c-num { width: 20px; } .c-a { width: 98px; } .c-b { width: 180px; } .c-c { width: 189px; } .c-d { width: 101px; } .c-f { width: 93px; } .c-g { width: 96px; } .c-std { width: 48px; } .c-wide { width: 49px; }
th, td { padding: 0; line-height: 13px; white-space: nowrap; overflow: hidden; }
th { font-weight: 400; color: #555; background: #f0f0f0; }
thead th { border-bottom: 1px solid #b5b5b5; border-right: 1px solid #dcdcdc; }
tbody th { text-align: right; padding-right: 1px; border-right: 1px solid #b5b5b5; border-bottom: 1px solid #dcdcdc; }
.corner svg { width: 9px; height: 9px; margin: 2px 3px 0 auto; }
thead .sel { background: #d9dfdb; color: #1a6b40; border-bottom: 2px solid #2b7a4b; line-height: 13px; }
tbody .sel { background: #e0e6e2; color: #1a7f48; border-right: 2px solid #2b7a4b; padding-right: 0; }
td { border-right: 1px solid #e1e1e1; border-bottom: 1px solid #e1e1e1; }
.d { border-color: #2b2b2b; font-family: Lato, "Open Sans", sans-serif; font-size: 10px; font-variant-ligatures: none; color: #111; padding-left: 2px; }
.id { font-size: 9px; padding-left: 1px; }
.email { font-size: 11px; }
.pay { padding-left: 1px; }
.mid { text-align: center; padding: 0; }
.cursor { position: relative; overflow: visible; }
.cursor::before { content: ""; position: absolute; inset: -2px -2px 0 -2px; border: 2px solid #2b7a4b; border-bottom: 0; }
.cursor::after { content: ""; position: absolute; right: -3px; bottom: 1px; width: 4px; height: 2px; background: #2b7a4b; }
.vscroll { width: 15px; background: #f3f3f3; border-left: 1px solid #ddd; display: flex; flex-direction: column; align-items: center; padding: 2px 0 1px; }
.vscroll i { width: 7px; height: 13px; border-radius: 4px; background: #666; margin-top: 3px; }
.tri { width: 8px; height: 8px; }
.vscroll .end { margin-top: auto; }

.sheetbar { height: 24px; flex: none; display: flex; align-items: center; background: linear-gradient(90deg, #e2ebec 0%, #e6e9ea 14%, #ebe3e4 30%, #ece3e6 68%, #e5e8ea 88%, #deebec 100%); font-size: 10px; }
.arrows { display: flex; width: 87px; padding-left: 18px; gap: 15px; }
.stab { height: 24px; padding: 0 8px; color: #444; border-right: 1px solid #cfd5d6; width: 51px; }
.stab.on { width: 43px; margin-right: 4px; background: #fff; height: 20px; align-self: flex-start; border: 0; border-radius: 0 0 4px 4px; font-weight: 600; color: #222; padding: 0; }
.stab.on span { border-bottom: 2px solid #1a7f48; line-height: 15px; margin-top: 2px; }
.add { margin-left: 31px; }
.sheetbar .dots { margin-left: auto; margin-right: 13px; }
.hscroll { width: 546px; margin-right: 14px; height: 13px; background: #f6f4f5; border-radius: 6px; display: flex; align-items: center; }
.hscroll i { width: 494px; height: 7px; border-radius: 4px; background: #6b6b6b; margin-left: 2px; }
.hscroll .end { margin-left: auto; margin-right: 2px; }

.status { height: 17px; flex: none; background: #f5f5f5; border-bottom: 1px solid #bdbdbd; display: flex; align-items: center; font-size: 8px; padding: 1px 6px 0 8px; }
.acc { font-weight: 600; gap: 2px; margin-left: 15px; margin-right: auto; }
.view { width: 30px; height: 16px; }
.view.on { background: #dedede; }
.z { margin-left: 3px; }
.slider { appearance: none; width: 76px; height: 12px; margin-left: 4px; }
.slider::-webkit-slider-runnable-track { height: 1px; background: #999; }
.slider::-webkit-slider-thumb { appearance: none; width: 4px; height: 9px; margin-top: -4px; background: #666; }
.slider + .z { margin-left: 2px; }
.pct { margin-left: 8px; }

.taskbar { height: 35px; flex: none; background: #d9d9d9; display: grid; grid-template-columns: 1fr auto 1fr; align-items: center; }
.weather { display: flex; align-items: center; padding-left: 15px; position: relative; gap: 3px; }
.sun { width: 20px; height: 20px; }
.count { position: absolute; left: 23px; top: -1px; width: 12px; height: 12px; border-radius: 50%; background: #c22a22; color: #fff; text-align: center; font-size: 8px; line-height: 12px; }
.sky { color: #666; }
.apps { display: flex; align-items: center; height: 35px; padding-left: 2px; }
.start { width: 33px; }
.tsearch { margin-left: 4px; width: 163px; height: 23px; border-radius: 12px; background: #f3f3f3; border: 1px solid #e6e6e6; display: flex; align-items: center; padding: 0 3px 0 6px; gap: 6px; }
.tsearch input { flex: 1; width: 40px; font-size: 10px; }
.tsearch input::placeholder { color: #666; }
.pic { width: 36px; height: 18px; }
.icons { display: flex; width: 465px; height: 35px; align-items: center; margin-left: 1px; }
.icons button { flex: 1; height: 35px; position: relative; }
.run::after { content: ""; position: absolute; bottom: 1px; width: 5px; height: 2px; border-radius: 1px; background: #777; }
.badge { position: absolute; left: 17px; top: 5px; width: 12px; height: 12px; border-radius: 50%; color: #fff; font-size: 8px; line-height: 12px; text-align: center; }
.person svg { width: 12px; height: 12px; }
.blue { background: #1483cf; } .teal { background: #108f9c; } .brown { background: #8b6b5e; } .rust { background: #bf360c; } .green { background: #33691e; } .pink { background: #c2185b; }
.xl::before { content: ""; position: absolute; width: 28px; height: 28px; top: 4px; background: #ececec; border-radius: 3px; z-index: 0; }
.xl svg { position: relative; }
.run.xl::after { width: 12px; background: #0a66c2; }
.tray { display: flex; align-items: center; justify-content: flex-end; padding-right: 14px; }
.tray .i10 { margin-right: 14px; }
.lang { text-align: center; margin: 0 13px 0 13px; }
.mon { margin-right: 5px; }
.clock { text-align: right; margin: 0 5px 0 9px; }
</style>
